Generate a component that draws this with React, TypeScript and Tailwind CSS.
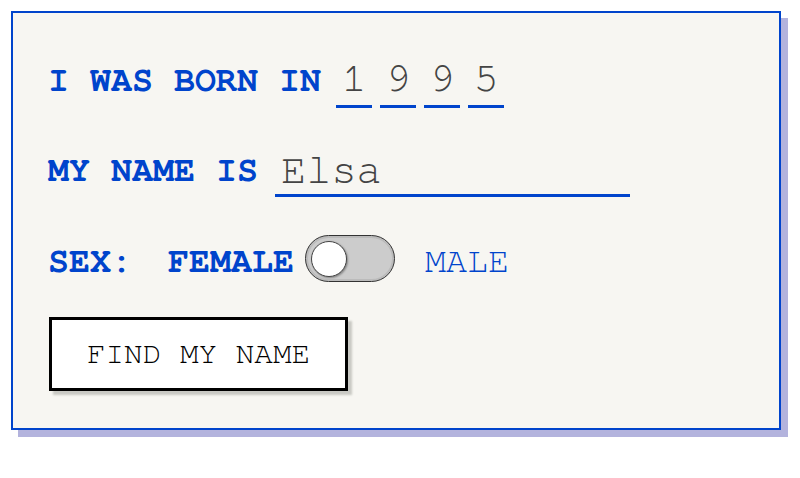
import { useState } from "react";

const mono = "font-['FreeMono','Courier_New','Liberation_Mono',monospace]";

export default function App() {
  const [year, setYear] = useState(["1", "9", "9", "5"]);
  const [name, setName] = useState("Elsa");
  const [male, setMale] = useState(false);

  return (
    <div className={`w-[800px] h-[478px] bg-white ${mono}`}>
      <div className="ml-[11px] mt-[11px] w-[770px] h-[419px] border-2 border-[#0044cc] bg-[#f7f6f2] shadow-[7px_7px_0_#b3b3dd] pl-[35px] pt-[25px]">
        {/* year */}
        <div className="flex items-end h-[70px]">
          <span className="text-[35px] font-bold text-[#0044cc] leading-none mb-[10px]">I WAS BORN IN</span>
          <div className="flex gap-[8px] ml-[15px]">
            {year.map((d, i) => (
              <input
                key={i}
                value={d}
                maxLength={1}
                onChange={(e) => {
                  const next = [...year];
                  next[i] = e.target.value;
                  setYear(next);
                }}
                className={`w-[36px] h-[56px] bg-transparent border-b-[3px] border-[#0044cc] text-center text-[42px] text-[#444] outline-none ${mono}`}
              />
            ))}
          </div>
        </div>

        {/* name */}
        <div className="flex items-end mt-[39px]">
          <span className="text-[35px] font-bold text-[#0044cc] leading-none mb-[9px]">MY NAME IS</span>
          <input
            value={name}
            onChange={(e) => setName(e.target.value)}
            className={`ml-[17px] w-[355px] h-[50px] bg-transparent border-b-[3px] border-[#0044cc] px-[6px] text-[42px] text-[#444] outline-none ${mono}`}
          />
        </div>

        {/* sex */}
        <div className="flex items-center mt-[38px] h-[47px]">
          <span className="mt-[5px] text-[35px] font-bold text-[#0044cc] leading-none">SEX:</span>
          <span className="mt-[5px] ml-[36px] text-[35px] font-bold text-[#0044cc] leading-none">FEMALE</span>
          <button
            onClick={() => setMale(!male)}
            className="ml-[11px] w-[90px] h-[47px] rounded-full border border-[#333] bg-[#cccccc] p-[5px] flex items-center shadow-[inset_0_0_0_2px_#bbb]"
          >
            <span
              className={`block w-[36px] h-[36px] rounded-full bg-white border-[1.5px] border-[#444] shadow-[1px_1px_2px_rgba(0,0,0,0.35)] ${male ? "ml-auto" : ""}`}
            />
          </button>
          <span className="mt-[5px] ml-[30px] text-[35px] text-[#0044cc] leading-none">MALE</span>
        </div>

        {/* button */}
        <button className="mt-[35px] ml-[1px] w-[299px] h-[74px] border-[3px] border-black bg-white text-[31px] text-black shadow-[4px_4px_2px_#c9c9c4]">
          FIND MY NAME
        </button>
      </div>
    </div>
  );
}
